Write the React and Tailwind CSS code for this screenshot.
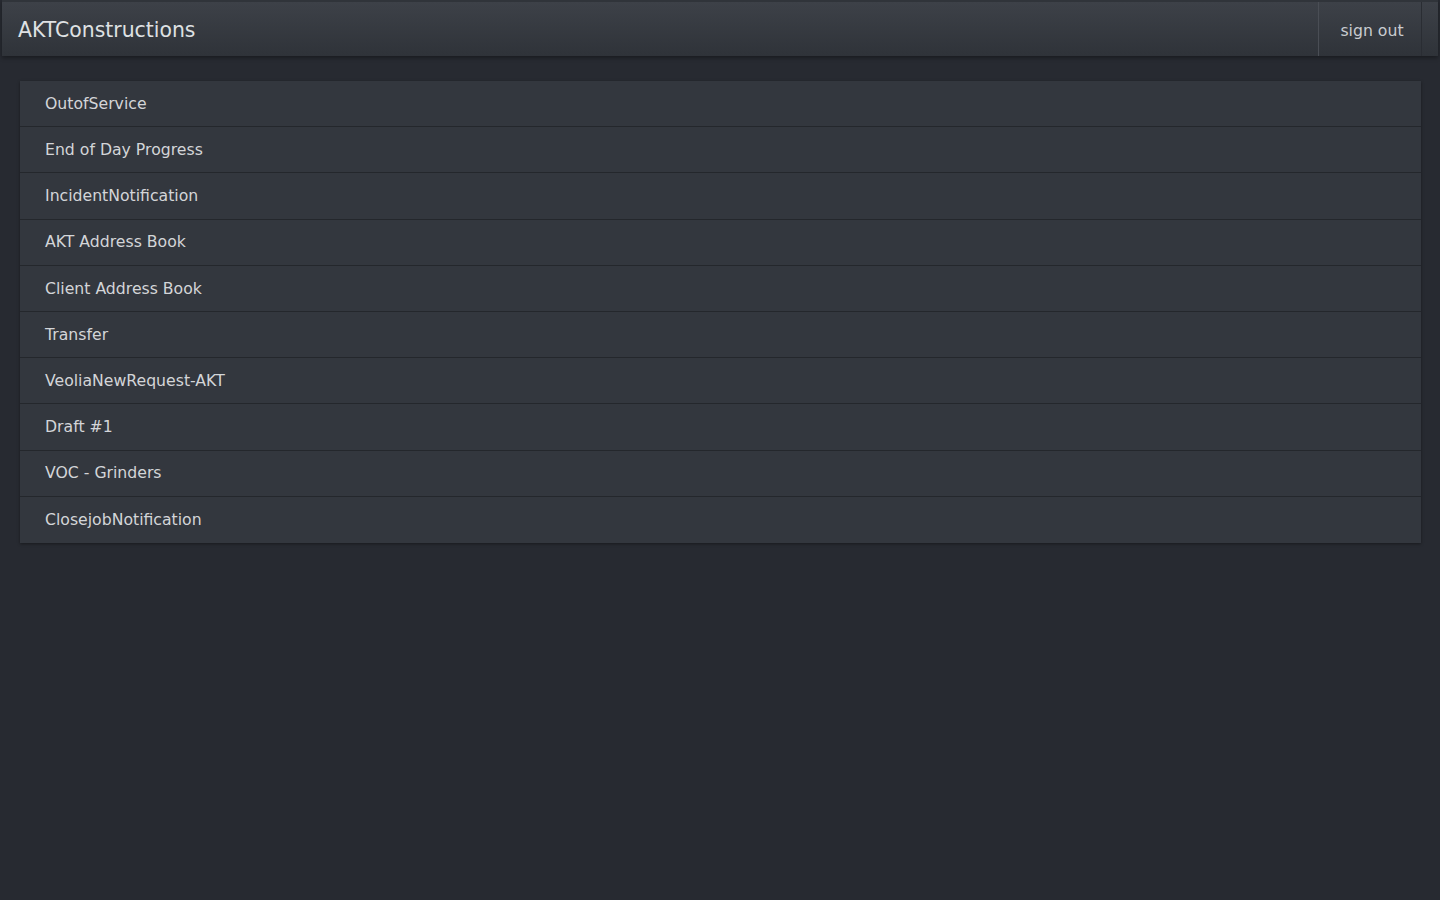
const items = [
  "OutofService",
  "End of Day Progress",
  "IncidentNotification",
  "AKT Address Book",
  "Client Address Book",
  "Transfer",
  "VeoliaNewRequest-AKT",
  "Draft #1",
  "VOC - Grinders",
  "ClosejobNotification",
];

export default function App() {
  return (
    <div className="min-h-[900px] bg-[#272a31] font-['DejaVu_Sans',sans-serif] antialiased">
      <header className="mx-[2px] flex h-[56px] items-stretch border-t-2 border-[#30343a] bg-gradient-to-b from-[#3d4148] to-[#2f3339] shadow-[0_2px_4px_rgba(0,0,0,0.35)]">
        <div className="flex flex-1 items-center pl-4 pt-[3px] text-[20.4px] text-[#dfe1e3]">AKTConstructions</div>
        <button
          type="button"
          className="mr-[16px] flex w-[104px] items-center justify-center border-l border-[#4a4e55] border-r border-r-[#2a2d33] pl-[4px] pt-[3px] text-[15.7px] text-[#c9ccd0]"
        >
          sign out
        </button>
      </header>
      <div className="px-[20px] pt-[25px]">
        <ul className="w-[1401px] shadow-[0_1px_3px_rgba(0,0,0,0.4)]">
          {items.map((item, i) => (
            <li
              key={i}
              className="flex h-[46.2px] items-center border-b border-[#24272c] bg-[#33373e] pl-[25px] text-[15.7px] text-[#d3d5d8] last:border-b-0"
            >
              {item}
            </li>
          ))}
        </ul>
      </div>
    </div>
  );
}
